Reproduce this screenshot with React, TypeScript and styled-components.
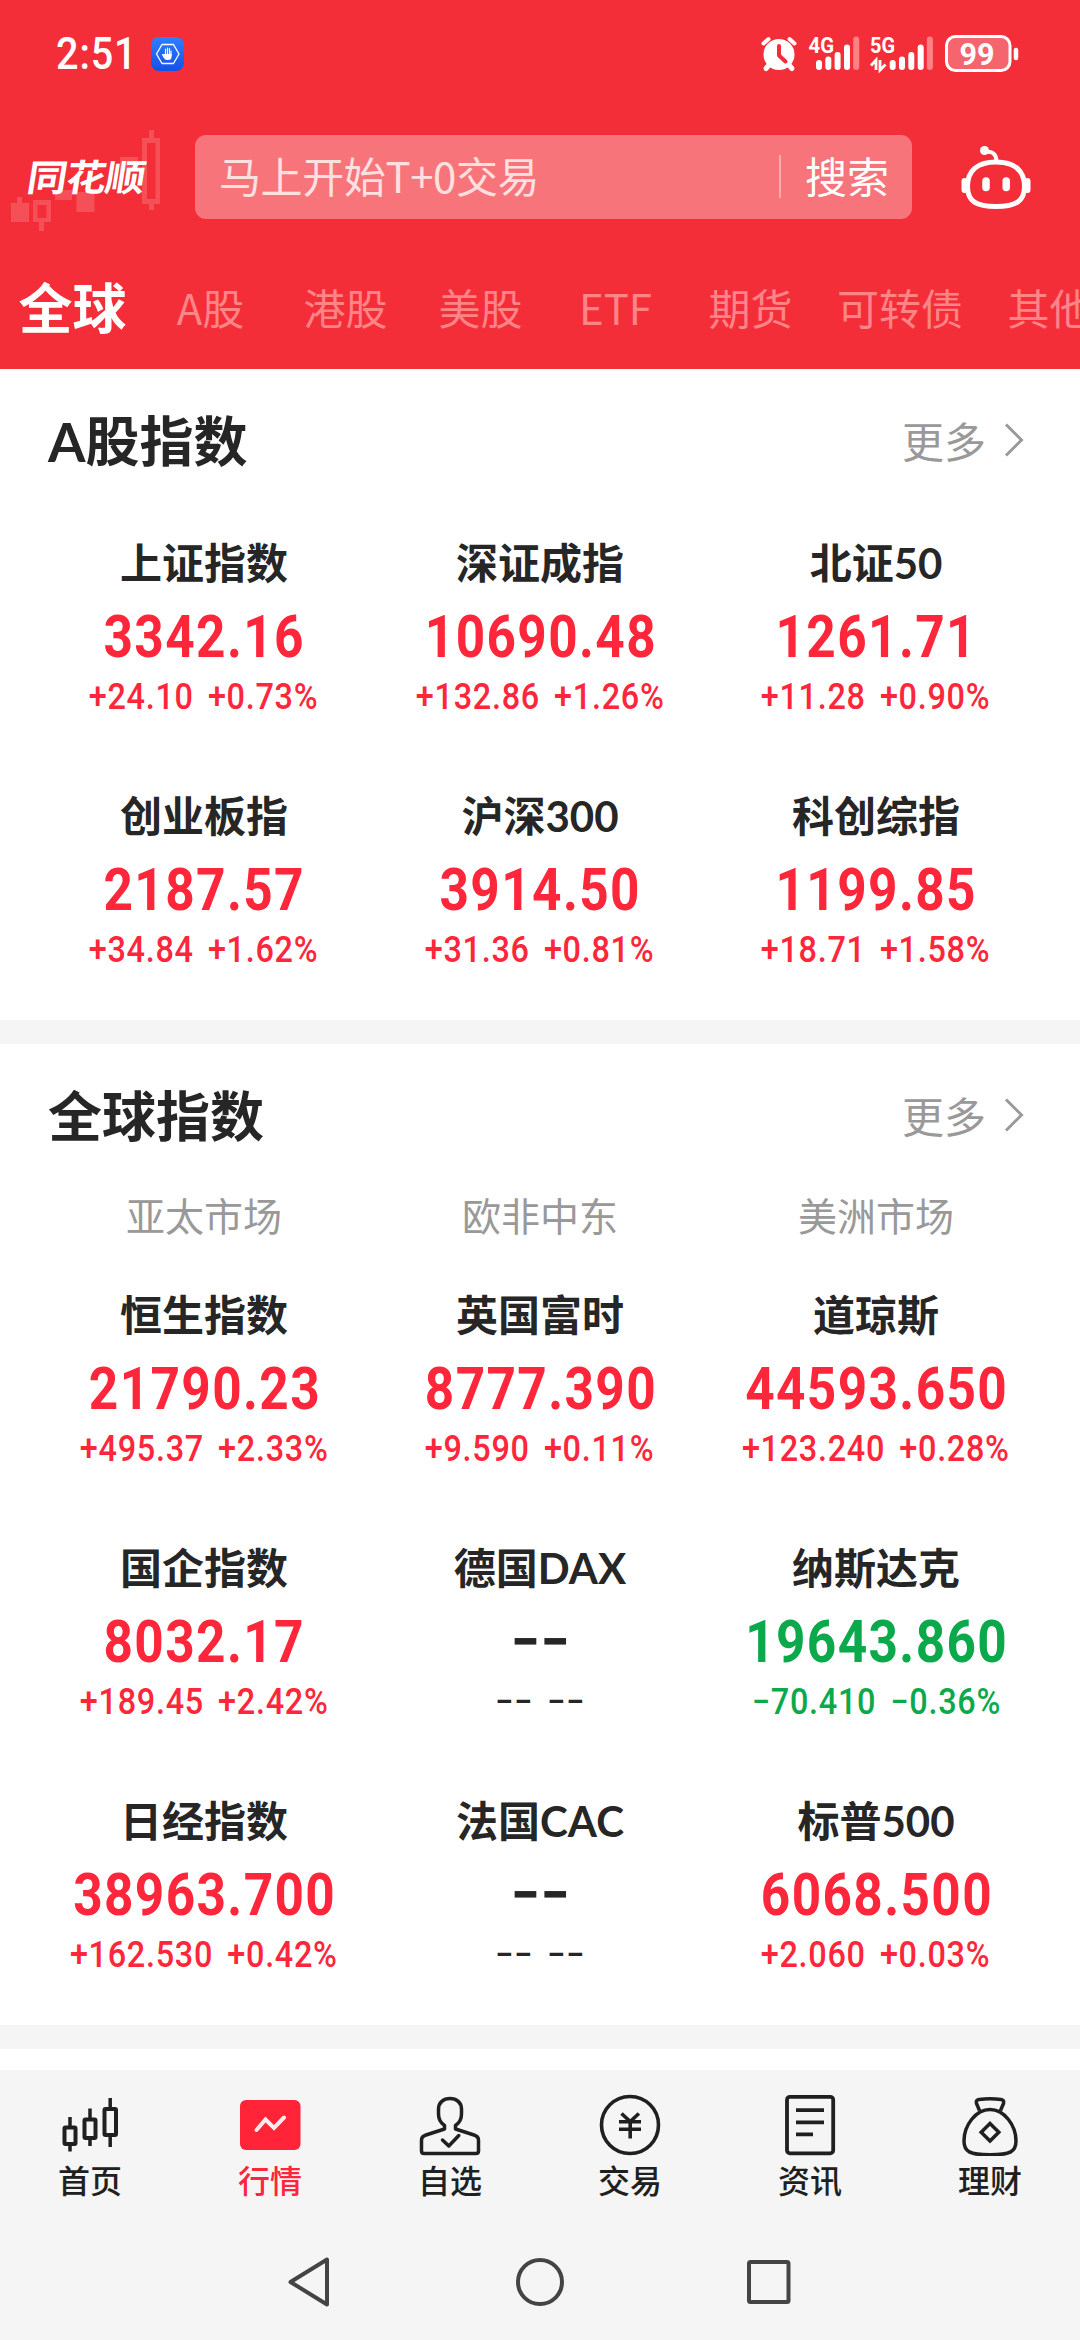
import React from 'react';
import styled, { createGlobalStyle } from 'styled-components';

const CJK = `'Noto Sans CJK SC', 'Noto Sans', sans-serif`;
const MIXED = `Lato, 'Noto Sans CJK SC', sans-serif`;
const NUM = `Roboto, 'Noto Sans CJK SC', sans-serif`;
const RED = '#fd263a';
const GREEN = '#0ca94c';
const INK = '#262626';

const GlobalStyle = createGlobalStyle`
  * { box-sizing: border-box; }
  html, body { margin: 0; padding: 0; background: #fff; }
  body { font-family: ${CJK}; overflow: hidden; }
`;

const Screen = styled.div`
  width: 1080px;
  height: 2340px;
  display: flex;
  flex-direction: column;
  overflow: hidden;
  background: #fff;
`;

const Header = styled.header`
  height: 369px;
  flex: none;
  background: #f42e38;
  display: flex;
  flex-direction: column;
`;

const StatusBar = styled.div`
  height: 108px;
  padding: 0 58px 0 56px;
  display: flex;
  align-items: center;
  justify-content: space-between;
`;

const StatusGroup = styled.div`
  display: flex;
  align-items: center;
`;

const Clock = styled.span`
  width: 94px;
  font: 500 45px/54px ${NUM};
  color: #fff;
  letter-spacing: 1px;
  transform: scaleX(0.88);
  transform-origin: left center;
  white-space: nowrap;
`;

const SearchRow = styled.div`
  height: 140px;
  display: flex;
  align-items: center;
`;

const Logo = styled.div`
  width: 195px;
  height: 140px;
  flex: none;
  position: relative;
`;

const LogoBackdrop = styled.svg`
  position: absolute;
  left: 0;
  top: 0;
`;

const LogoText = styled.span`
  position: absolute;
  left: 28px;
  top: 42px;
  font: 700 40px/50px ${CJK};
  letter-spacing: -1px;
  color: #fff;
  transform: skewX(-9deg) scaleY(0.92);
  white-space: nowrap;
`;

const SearchBox = styled.div`
  width: 717px;
  height: 84px;
  flex: none;
  margin-bottom: 2px;
  padding: 0 23px 4px 24px;
  border-radius: 11px;
  background: #f6747a;
  display: flex;
  align-items: center;
`;

const Placeholder = styled.span`
  flex: 1;
  font-size: 42px;
  line-height: 60px;
  letter-spacing: -0.4px;
  color: #ffe0e0;
  white-space: nowrap;
`;

const SearchDivider = styled.i`
  width: 2px;
  height: 43px;
  margin: 3px 24px 0 0;
  background: #fbaaae;
`;

const SearchLabel = styled.span`
  font-size: 42px;
  line-height: 60px;
  color: #fff;
`;

const Assistant = styled.svg`
  margin-left: 46px;
`;

const Tabs = styled.nav`
  height: 118px;
  padding-left: 2px;
  display: flex;
  align-items: center;
  overflow: hidden;
`;

const Tab = styled.span<{ $active?: boolean; $width?: number }>`
  width: ${p => p.$width ?? 135}px;
  flex: none;
  text-align: center;
  white-space: nowrap;
  line-height: 78px;
  margin-top: ${p => (p.$active ? -2 : 0)}px;
  font-size: ${p => (p.$active ? 54 : 42)}px;
  font-weight: ${p => (p.$active ? 700 : 400)};
  color: ${p => (p.$active ? '#fff' : '#ff8488')};
`;

const Section = styled.section<{ $height: number }>`
  height: ${p => p.$height}px;
  flex: none;
  padding: 0 36px;
  background: #fff;
`;

const SectionHead = styled.div`
  height: 141px;
  padding: 0 20px 0 12px;
  display: flex;
  align-items: center;
  justify-content: space-between;
`;

const Title = styled.h2`
  margin: 0;
  padding-top: 5px;
  font-family: ${MIXED};
  font-size: 54px;
  line-height: 78px;
  font-weight: 700;
  color: ${INK};
`;

const More = styled.span`
  display: flex;
  align-items: center;
  gap: 18px;
  font-size: 42px;
  line-height: 60px;
  color: #999;
`;

const Markets = styled.div`
  display: grid;
  grid-template-columns: repeat(3, 336px);
  padding-top: 4px;
`;

const Market = styled.span`
  text-align: center;
  font-size: 39px;
  line-height: 50px;
  color: #999;
`;

const Grid = styled.div<{ $top: number }>`
  display: grid;
  grid-template-columns: repeat(3, 336px);
  row-gap: 67px;
  padding-top: ${p => p.$top}px;
`;

const Cell = styled.div`
  height: 186px;
  display: flex;
  flex-direction: column;
  align-items: center;
  white-space: nowrap;
`;

const Name = styled.span`
  font-family: ${MIXED};
  font-size: 42px;
  line-height: 64px;
  font-weight: 700;
  color: ${INK};
`;

const Value = styled.span<{ $color: string }>`
  margin-top: 10px;
  font: 700 59px/64px ${NUM};
  letter-spacing: 1.6px;
  text-indent: 1.6px;
  color: ${p => p.$color};
  transform: scaleX(0.87);
`;

const Change = styled.span<{ $color: string }>`
  margin-top: 8px;
  font: 500 36px/40px ${NUM};
  letter-spacing: 0.8px;
  word-spacing: 6px;
  color: ${p => p.$color};
  transform: scaleX(0.9);
`;

const Gap = styled.div<{ $height: number; $color: string }>`
  height: ${p => p.$height}px;
  flex: none;
  background: ${p => p.$color};
`;

const Footer = styled.footer`
  height: 270px;
  flex: none;
  background: #f5f5f5;
`;

const NavBar = styled.nav`
  height: 154px;
  padding-top: 24px;
  display: grid;
  grid-template-columns: repeat(6, 1fr);
`;

const NavItem = styled.div<{ $active?: boolean }>`
  display: flex;
  flex-direction: column;
  align-items: center;
  gap: 5px;
  font-size: 32px;
  line-height: 36px;
  font-weight: 500;
  color: ${p => (p.$active ? RED : '#202020')};
`;

const SystemBar = styled.div`
  height: 116px;
  display: flex;
  align-items: center;
  justify-content: center;
  gap: 170px;
`;

const AppBadge = () => (
  <svg width="36" height="36" viewBox="150 35.5 36 36">
    <defs>
      <linearGradient id="badge" x1="0" y1="0" x2="0" y2="1">
        <stop offset="0" stopColor="#2f80ff" />
        <stop offset="1" stopColor="#1450e8" />
      </linearGradient>
    </defs>
    <rect x="151" y="36.5" width="33" height="34" rx="8" fill="url(#badge)" />
    <path d="M162 44h11.5l5.5 9.500-5.500 9.500H162l-5.500-9.500z" fill="none" stroke="#fff" strokeWidth="1.300" strokeLinejoin="round" />
    <path d="M165.500 48.500v6M167.500 47.500v7M169.500 48v7M171 50.500v5" stroke="#fff" strokeWidth="1.200" strokeLinecap="round" />
    <path d="M164.500 53.500h7v3q0 3-3 3h-1.500q-2 0-3.500-2.500l-1.800-3 1-.4z" fill="#fff" />
  </svg>
);

const SignalBars = ({ x }: { x: number }) => (
  <g stroke="#fff" strokeWidth="6" strokeLinecap="round">
    <path d={`M${x} 63v4`} />
    <path d={`M${x + 9.3} 59.500v7.500`} />
    <path d={`M${x + 18.6} 55v12`} />
    <path d={`M${x + 28} 47.500v19.500`} />
    <path d={`M${x + 37.2} 39.500v27.500`} stroke="#ff8085" />
  </g>
);

const StatusIcons = () => (
  <svg width="262" height="44" viewBox="760 32 262 44">
    <g stroke="#fff" strokeLinecap="round" fill="none">
      <circle cx="779" cy="54.500" r="15.500" fill="#fff" stroke="none" />
      <path d="M763.500 43.500l5-4.500M794.500 43.500l-5-4.500" strokeWidth="4" />
      <path d="M769 65l-3 3.500M789 65l3 3.500" strokeWidth="5" />
      <path d="M779 46v9.500l6.500 6" stroke="#f42e38" strokeWidth="4" strokeLinejoin="round" />
    </g>
    <g fill="#fff" fontFamily="Roboto, sans-serif" fontWeight="700">
      <text x="808.500" y="53" fontSize="22" textLength="25.500" lengthAdjust="spacingAndGlyphs">4G</text>
      <text x="870" y="53" fontSize="22" textLength="25" lengthAdjust="spacingAndGlyphs">5G</text>
    </g>
    <SignalBars x={819} />
    <SignalBars x={892.7} />
    <path d="M871 65.500l5-5.500v10M880 60v10l5.500-5.500" fill="none" stroke="#fff" strokeWidth="2.800" />
    <rect x="946.500" y="36.500" width="63.500" height="34" rx="9" fill="#f5656e" stroke="#fff" strokeWidth="3" />
    <path d="M1016 50v8" stroke="#fff" strokeWidth="4.500" strokeLinecap="round" />
    <text x="959.500" y="65" fontSize="32" fontFamily="Roboto, sans-serif" fontWeight="700" fill="#fff" textLength="35" lengthAdjust="spacingAndGlyphs">99</text>
  </svg>
);

const LogoCandles = () => (
  <LogoBackdrop width="195" height="140" viewBox="0 108 195 140">
    <g fill="#fff" opacity="0.16">
      <path d="M11 203h6v-6h5v6h7v19H11z" />
      <path fillRule="evenodd" d="M33 200h18v22h-7v9h-5v-9h-6zM37.500 205v13h9v-13z" />
      <path d="M55 190h17v10H55zM76.500 192h18v20h-18zM120 157h18v14h-18z" />
      <path fillRule="evenodd" d="M142 138h7v-8h5v8h6v66h-6v6h-5v-6h-7zM147 143v56h8.500v-56z" />
    </g>
  </LogoBackdrop>
);

const Robot = () => (
  <Assistant width="76" height="70" viewBox="958 141 76 70">
    <g fill="none" stroke="#fff" strokeWidth="5" strokeLinecap="round">
      <path d="M996 160c19 0 28.500 9 28.500 24.500 0 15-9 20-28.500 20s-28.500-5-28.500-20C967.500 169 977 160 996 160z" />
      <path d="M985 150c7-1.500 11 2 11.500 8.500" strokeWidth="4" />
      <path d="M964.500 179v9M1027.500 179v9" strokeWidth="6" />
      <path d="M986 179v6.500M1006.200 179v6.500" strokeWidth="7.500" />
    </g>
    <circle cx="984.500" cy="148.500" r="4.500" fill="#fff" />
  </Assistant>
);

const Chevron = () => (
  <svg width="20" height="36" viewBox="1004 423 20 36">
    <path d="M1006 425.500l15.500 15.500-15.500 15.500" fill="none" stroke="#999" strokeWidth="3" />
  </svg>
);

const icons: Record<string, React.ReactNode> = {
  首页: (
    <svg width="62" height="62" viewBox="59 2094 62 62" fill="none" stroke="currentColor" strokeWidth="4">
      <rect x="64.500" y="2127.500" width="11" height="16.500" rx="1" />
      <rect x="84.500" y="2119.500" width="11" height="18.500" rx="1" />
      <rect x="104.500" y="2109" width="11.500" height="26" rx="1" />
      <path d="M70 2117v10M70 2144v7.500M90 2108.500v10.500M90 2138v8M110.200 2098v11M110.200 2135v12" strokeWidth="3.500" />
    </svg>
  ),
  行情: (
    <svg width="62" height="62" viewBox="239 2094 62 62">
      <rect x="240" y="2100" width="60.500" height="50" rx="6" fill="#ff2438" />
      <path d="M256.500 2130l9-10.500 8.500 8.500 10-10.500" fill="none" stroke="#ffe9ea" strokeWidth="4" strokeLinecap="round" />
    </svg>
  ),
  自选: (
    <svg width="62" height="62" viewBox="419 2094 62 62" fill="none" stroke="currentColor" strokeWidth="3.500" strokeLinejoin="round">
      <path d="M444.500 2129v-3.500c-4.500-3-6-6.500-6-11.500v-5c0-6.500 5-10.500 11.500-10.500s11.500 4 11.500 10.500v5c0 5-1.500 8.500-6 11.500v3.500l18.500 6q4.500 1.500 4.500 5v11q0 2.500-2.500 2.500h-52q-2.500 0-2.500-2.500v-11q0-3.500 4.500-5z" />
      <path d="M442.500 2140l6.300 6 10-10.500" strokeLinecap="round" />
    </svg>
  ),
  交易: (
    <svg width="62" height="62" viewBox="599 2094 62 62" fill="none" stroke="currentColor" strokeWidth="3.600">
      <circle cx="630" cy="2125" r="28.500" />
      <path d="M621.500 2113.500l8.700 8 8.700-8M619 2121.700h22M619 2129.300h22M630.200 2121v17.500" />
    </svg>
  ),
  资讯: (
    <svg width="62" height="62" viewBox="779 2094 62 62" fill="none" stroke="currentColor" strokeWidth="3.800">
      <rect x="787" y="2096.800" width="46.200" height="56.500" rx="3" />
      <path d="M796 2110.200h28M796 2122.300h28M796 2134.300h17" />
    </svg>
  ),
  理财: (
    <svg width="62" height="62" viewBox="959 2094 62 62" fill="none" stroke="currentColor" strokeWidth="3.500" strokeLinejoin="round">
      <path d="M979.500 2110.500l-3-7q-1-3.500 2.500-4 11-1.500 22 0 3.500.5 2.500 4l-3 7" />
      <path d="M990 2109.500c-14 0-26 15.500-26 31.500 0 10.500 5.500 13.800 26 13.800s26-3.300 26-13.800c0-16-12-31.500-26-31.500z" />
      <path d="M990 2123.500l8.800 8.800-8.800 8.800-8.800-8.800z" strokeLinejoin="miter" />
    </svg>
  ),
};

type Quote = { name: string; value: string; change: string; tone?: 'up' | 'down' | 'none' };

const aShares: Quote[] = [
  { name: '上证指数', value: '3342.16', change: '+24.10 +0.73%' },
  { name: '深证成指', value: '10690.48', change: '+132.86 +1.26%' },
  { name: '北证50', value: '1261.71', change: '+11.28 +0.90%' },
  { name: '创业板指', value: '2187.57', change: '+34.84 +1.62%' },
  { name: '沪深300', value: '3914.50', change: '+31.36 +0.81%' },
  { name: '科创综指', value: '1199.85', change: '+18.71 +1.58%' },
];

const world: Quote[] = [
  { name: '恒生指数', value: '21790.23', change: '+495.37 +2.33%' },
  { name: '英国富时', value: '8777.390', change: '+9.590 +0.11%' },
  { name: '道琼斯', value: '44593.650', change: '+123.240 +0.28%' },
  { name: '国企指数', value: '8032.17', change: '+189.45 +2.42%' },
  { name: '德国DAX', value: '−−', change: '−− −−', tone: 'none' },
  { name: '纳斯达克', value: '19643.860', change: '−70.410 −0.36%', tone: 'down' },
  { name: '日经指数', value: '38963.700', change: '+162.530 +0.42%' },
  { name: '法国CAC', value: '−−', change: '−− −−', tone: 'none' },
  { name: '标普500', value: '6068.500', change: '+2.060 +0.03%' },
];

const tones = { up: RED, down: GREEN, none: INK };

const Quotes = ({ items, top }: { items: Quote[]; top: number }) => (
  <Grid $top={top}>
    {items.map(q => {
      const color = tones[q.tone ?? 'up'];
      return (
        <Cell key={q.name}>
          <Name>{q.name}</Name>
          <Value $color={color}>{q.value}</Value>
          <Change $color={color}>{q.change}</Change>
        </Cell>
      );
    })}
  </Grid>
);

const Heading = ({ children }: { children: React.ReactNode }) => (
  <SectionHead>
    <Title>{children}</Title>
    <More>
      更多
      <Chevron />
    </More>
  </SectionHead>
);

export default function App() {
  return (
    <Screen>
      <GlobalStyle />
      <Header>
        <StatusBar>
          <StatusGroup>
            <Clock>2:51</Clock>
            <AppBadge />
          </StatusGroup>
          <StatusIcons />
        </StatusBar>
        <SearchRow>
          <Logo>
            <LogoCandles />
            <LogoText>同花顺</LogoText>
          </Logo>
          <SearchBox>
            <Placeholder>马上开始T+0交易</Placeholder>
            <SearchDivider />
            <SearchLabel>搜索</SearchLabel>
          </SearchBox>
          <Robot />
        </SearchRow>
        <Tabs>
          <Tab $active $width={141}>全球</Tab>
          <Tab>A股</Tab>
          <Tab>港股</Tab>
          <Tab>美股</Tab>
          <Tab>ETF</Tab>
          <Tab>期货</Tab>
          <Tab $width={164}>可转债</Tab>
          <Tab>其他</Tab>
        </Tabs>
      </Header>

      <Section $height={651}>
        <Heading>A股指数</Heading>
        <Quotes items={aShares} top={21} />
      </Section>
      <Gap $height={24} $color="#f5f5f5" />
      <Section $height={981}>
        <Heading>全球指数</Heading>
        <Markets>
          <Market>亚太市场</Market>
          <Market>欧非中东</Market>
          <Market>美洲市场</Market>
        </Markets>
        <Quotes items={world} top={44} />
      </Section>
      <Gap $height={24} $color="#f5f5f5" />
      <Gap $height={21} $color="#fff" />

      <Footer>
        <NavBar>
          {Object.keys(icons).map(label => (
            <NavItem key={label} $active={label === '行情'}>
              {icons[label]}
              {label}
            </NavItem>
          ))}
        </NavBar>
        <SystemBar>
          <svg width="60" height="60" viewBox="279.500 2252 60 60">
            <path d="M290 2282l36.500-22.500v45z" fill="none" stroke="#444" strokeWidth="4" strokeLinejoin="round" />
          </svg>
          <svg width="60" height="60" viewBox="510 2252 60 60">
            <circle cx="540" cy="2282" r="22" fill="none" stroke="#444" strokeWidth="4" />
          </svg>
          <svg width="60" height="60" viewBox="740.500 2252 60 60">
            <rect x="749.500" y="2262" width="39.500" height="40" rx="1.500" fill="none" stroke="#444" strokeWidth="4" />
          </svg>
        </SystemBar>
      </Footer>
    </Screen>
  );
}
